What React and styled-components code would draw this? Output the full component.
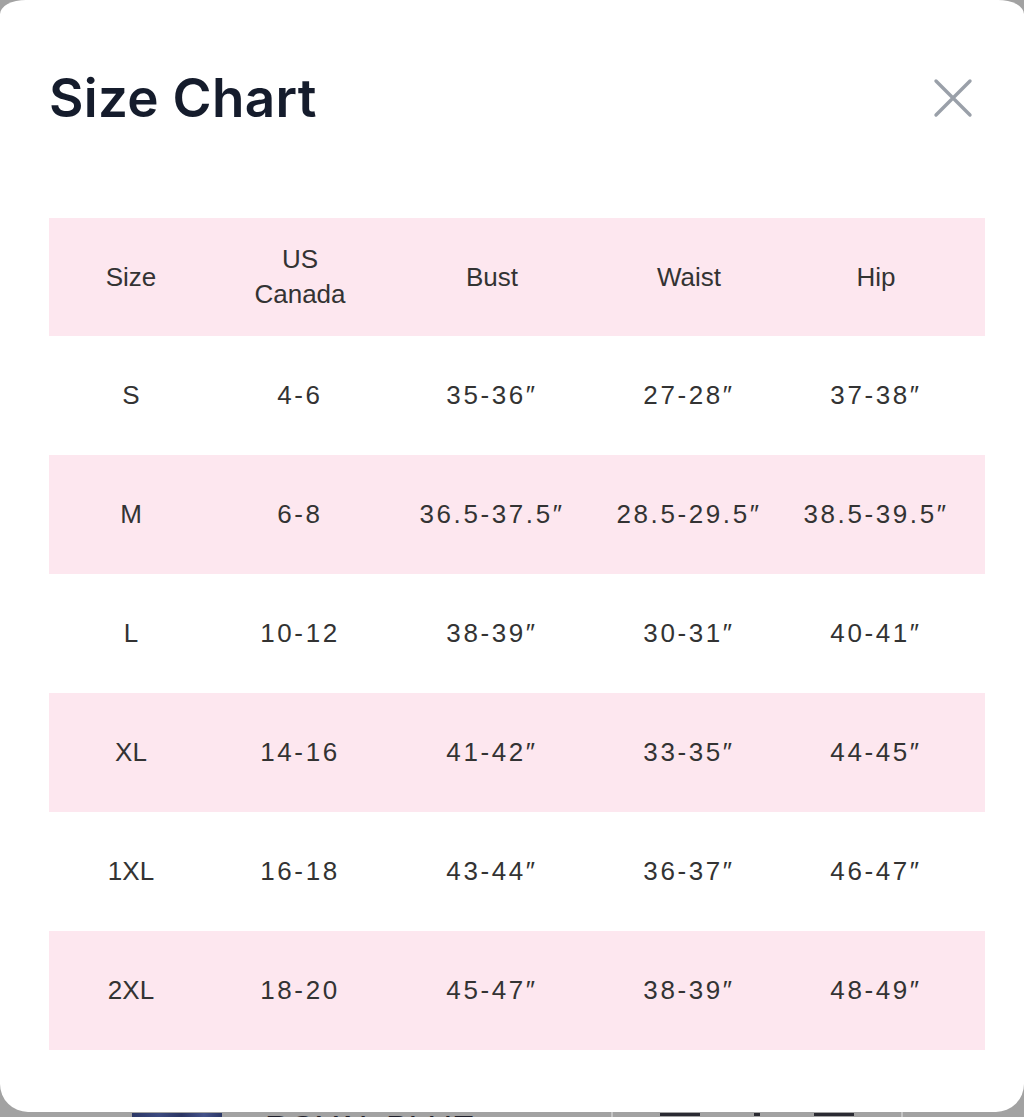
import React from "react";
import styled, { createGlobalStyle } from "styled-components";

const GlobalStyle = createGlobalStyle`
  html, body {
    margin: 0;
    padding: 0;
    background-color: #a2a2a2;
  }
  * {
    box-sizing: border-box;
  }
`;

const PageDiv = styled.div`
  height: 1117px;
  overflow: hidden;
  display: flex;
  flex-direction: column;
  background-color: #a2a2a2;
`;

const ModalDiv = styled.div`
  flex-shrink: 0;
  height: 1112px;
  background-color: #ffffff;
  border-radius: 26px 26px 28px 28px / 14px 14px 28px 28px;
  padding: 0 39px 0 49px;
  display: flex;
  flex-direction: column;
`;

const HeaderDiv = styled.div`
  height: 196px;
  display: flex;
  align-items: center;
  justify-content: space-between;
  padding-right: 12px;
`;

const TitleH1 = styled.h1`
  margin: 0;
  font-family: Inter, "Noto Sans", sans-serif;
  font-weight: 600;
  font-size: 53px;
  line-height: 1;
  color: #151c2c;
  letter-spacing: 0.3px;
`;

const CloseButton = styled.button`
  width: 40px;
  height: 40px;
  padding: 0;
  border: none;
  background: transparent;
  cursor: pointer;
  display: flex;
  align-items: center;
  justify-content: center;
`;

const TableDiv = styled.div`
  margin-top: 22px;
  width: 936px;
  display: flex;
  flex-direction: column;
`;

const RowDiv = styled.div`
  display: grid;
  grid-template-columns: 164px 174px 210px 184px 190px;
  height: ${(p) => (p.$head ? "118px" : "119px")};
  background-color: ${(p) => (p.$pink ? "#fde7ef" : "#ffffff")};
`;

const CellDiv = styled.div`
  display: flex;
  align-items: center;
  justify-content: center;
  text-align: center;
  font-family: "Liberation Sans", Arial, sans-serif;
  font-size: 26px;
  line-height: 35px;
  color: #333333;
  letter-spacing: ${(p) => (p.$head ? "0" : "2.6px")};
  white-space: nowrap;
`;

const BehindDiv = styled.div`
  flex: 1;
  display: flex;
  align-items: flex-start;
  padding-left: 132px;
  padding-top: 1px;
`;

const ThumbDiv = styled.div`
  width: 90px;
  height: 60px;
  background: linear-gradient(90deg, #2b3766 0%, #3c4a80 30%, #2a3462 55%, #44528a 80%, #2b3766 100%);
`;

const ColorLabel = styled.span`
  margin-left: 43px;
  margin-top: -3px;
  width: 346px;
  font-family: "Liberation Sans", Arial, sans-serif;
  font-size: 34px;
  line-height: 1;
  font-weight: 400;
  color: #1f1f2a;
  letter-spacing: 0;
`;

const StepperDiv = styled.div`
  width: 292px;
  height: 60px;
  margin-top: -1px;
  border-left: 2px solid #c4c4c4;
  border-right: 2px solid #c4c4c4;
  display: flex;
  justify-content: space-around;
  align-items: flex-start;
  padding: 1px 20px 0;
`;

const StepperMark = styled.div`
  width: ${(p) => p.$w}px;
  height: 3px;
  background-color: #2a2a32;
`;

const headers = ["Size", "US\nCanada", "Bust", "Waist", "Hip"];

const rows = [
  ["S", "4-6", "35-36″", "27-28″", "37-38″"],
  ["M", "6-8", "36.5-37.5″", "28.5-29.5″", "38.5-39.5″"],
  ["L", "10-12", "38-39″", "30-31″", "40-41″"],
  ["XL", "14-16", "41-42″", "33-35″", "44-45″"],
  ["1XL", "16-18", "43-44″", "36-37″", "46-47″"],
  ["2XL", "18-20", "45-47″", "38-39″", "48-49″"],
];

function CloseIcon() {
  return (
    <svg width="40" height="40" viewBox="0 0 40 40" fill="none">
      <path
        d="M3 3 L37 37 M37 3 L3 37"
        stroke="#9aa0a9"
        strokeWidth="3.4"
        strokeLinecap="round"
      />
    </svg>
  );
}

function App() {
  return (
    <>
      <GlobalStyle />
      <PageDiv>
        <ModalDiv>
          <HeaderDiv>
            <TitleH1>Size Chart</TitleH1>
            <CloseButton aria-label="Close">
              <CloseIcon />
            </CloseButton>
          </HeaderDiv>
          <TableDiv>
            <RowDiv $head $pink>
              {headers.map((h) => (
                <CellDiv key={h} $head>
                  <span>
                    {h.split("\n").map((line, i) => (
                      <div key={i}>{line}</div>
                    ))}
                  </span>
                </CellDiv>
              ))}
            </RowDiv>
            {rows.map((row, i) => (
              <RowDiv key={row[0]} $pink={i % 2 === 1}>
                {row.map((value, j) => (
                  <CellDiv key={j} $head={j === 0}>
                    {value}
                  </CellDiv>
                ))}
              </RowDiv>
            ))}
          </TableDiv>
        </ModalDiv>
        <BehindDiv>
          <ThumbDiv />
          <ColorLabel>ROYAL BLUE</ColorLabel>
          <StepperDiv>
            <StepperMark $w={40} />
            <StepperMark $w={6} />
            <StepperMark $w={40} />
          </StepperDiv>
        </BehindDiv>
      </PageDiv>
    </>
  );
}

export default App;
